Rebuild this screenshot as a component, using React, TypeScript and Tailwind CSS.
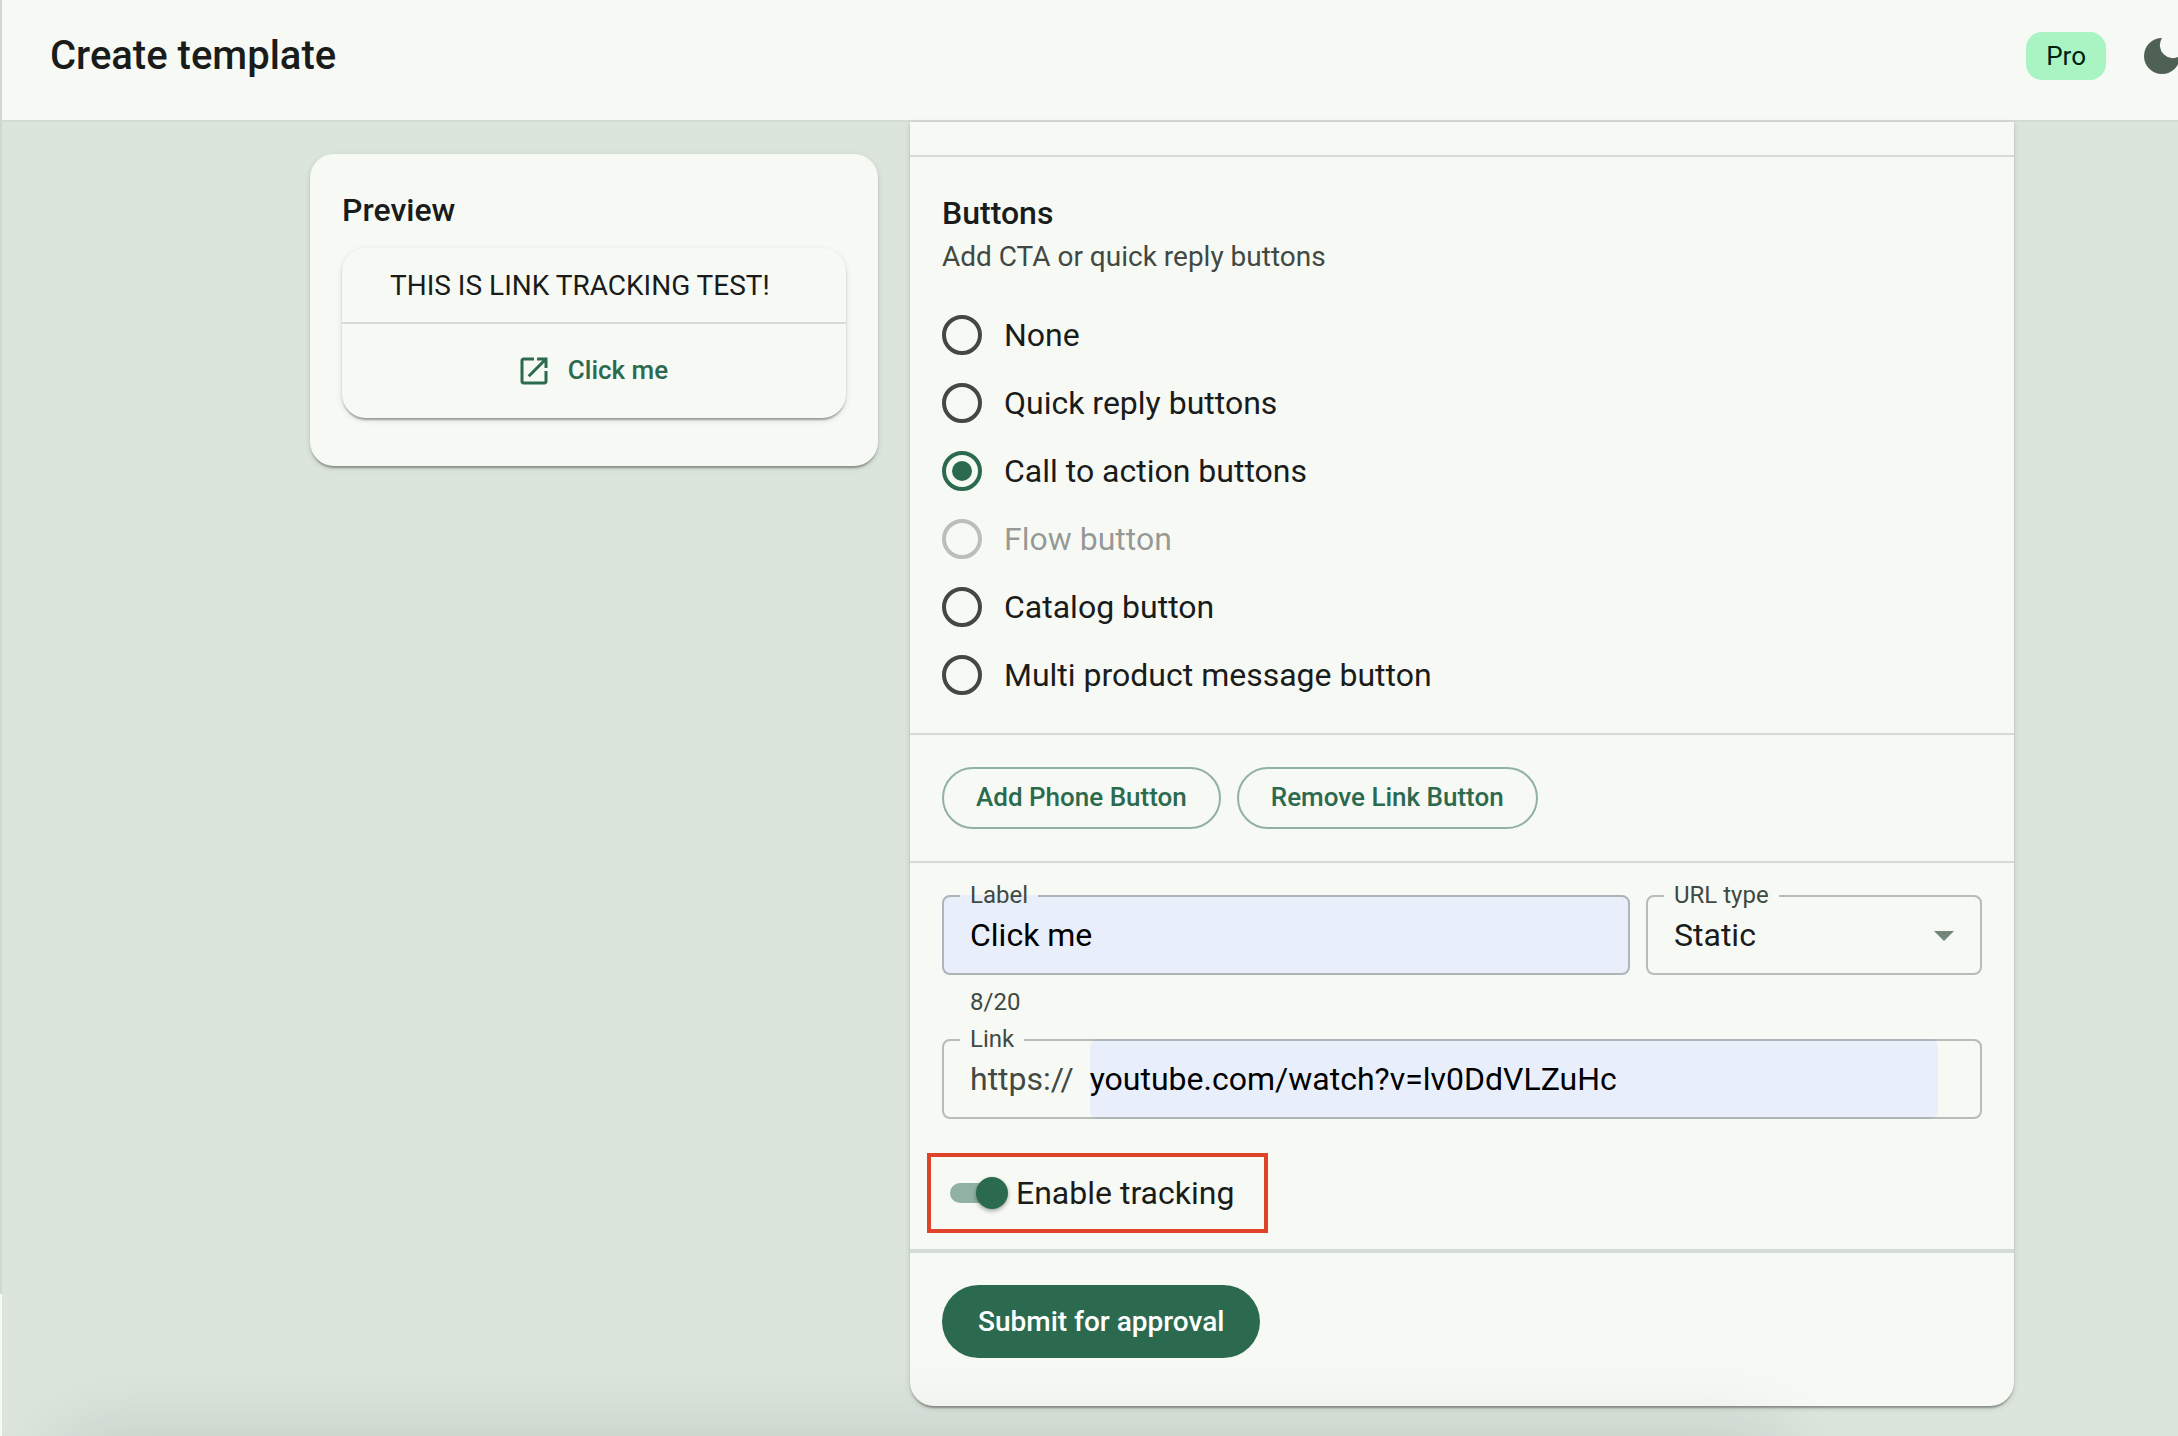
import React, { useState } from 'react';

type ButtonKind = 'none' | 'quick-reply' | 'cta' | 'flow' | 'catalog' | 'multi-product';

interface ButtonOption {
  value: ButtonKind;
  label: string;
  disabled?: boolean;
}

const buttonOptions: ButtonOption[] = [
  { value: 'none', label: 'None' },
  { value: 'quick-reply', label: 'Quick reply buttons' },
  { value: 'cta', label: 'Call to action buttons' },
  { value: 'flow', label: 'Flow button', disabled: true },
  { value: 'catalog', label: 'Catalog button' },
  { value: 'multi-product', label: 'Multi product message button' },
];

const cardShadow =
  'shadow-[0_4px_2px_-2px_rgba(0,0,0,0.2),0_2px_2px_0_rgba(0,0,0,0.14),0_2px_6px_0_rgba(0,0,0,0.12)]';

const MoonIcon = () => (
  <svg viewBox="0 0 24 24" className="size-12" fill="currentColor" aria-hidden="true">
    <path d="M12 3a9 9 0 1 0 9 9A6.5 6.5 0 0 1 12 3z" />
  </svg>
);

const OpenInNewIcon = () => (
  <svg viewBox="0 0 24 24" className="-ml-1 size-9" fill="currentColor" aria-hidden="true">
    <path d="M19 19H5V5h7V3H5c-1.11 0-2 .9-2 2v14c0 1.1.89 2 2 2h14c1.1 0 2-.9 2-2v-7h-2v7zM14 3v2h3.59l-9.83 9.83 1.41 1.41L19 6.41V10h2V3h-7z" />
  </svg>
);

interface OutlinedFieldProps {
  id: string;
  label: string;
  className?: string;
  children: React.ReactNode;
}

/** Outlined box whose label sits in a notch of the top border */
const OutlinedField: React.FC<OutlinedFieldProps> = ({ id, label, className = '', children }) => (
  <div className={`relative flex h-20 items-center rounded-lg ${className}`}>
    {children}
    <fieldset className="pointer-events-none absolute inset-x-0 -top-3 bottom-0 rounded-lg border-2 border-[#3f4941]/35">
      <legend className="ml-4 h-[26px] px-2.5 text-2xl leading-6 text-[#414942]">
        <label htmlFor={id}>{label}</label>
      </legend>
    </fieldset>
  </div>
);

const Header = () => (
  <header className="flex h-[122px] items-start justify-between overflow-hidden border-b-2 border-[#d3dbd4] bg-[#f7faf4] pl-12">
    <h1 className="py-7 text-[40px] leading-[56px] font-medium">Create template</h1>
    <div className="flex h-28 items-center gap-8">
      <span className="rounded-2xl bg-[#a9f4c2] px-5 text-[26px] leading-[48px] text-[#00210f]">Pro</span>
      <button type="button" aria-label="Toggle dark mode" className="-mr-2 text-[#4f6155]">
        <MoonIcon />
      </button>
    </div>
  </header>
);

const PreviewCard = ({ buttonLabel }: { buttonLabel: string }) => (
  <section className={`mt-8 rounded-3xl bg-[#f7faf4] px-8 pt-8 pb-12 ${cardShadow}`}>
    <h2 className="text-[32px] leading-[48px] font-medium">Preview</h2>
    <div className={`mt-3.5 rounded-3xl ${cardShadow}`}>
      <p className="px-12 pt-0.5 text-[28px] leading-[72px]">THIS IS LINK TRACKING TEST!</p>
      <div className="flex h-24 items-center justify-center gap-4 border-t-2 border-[#d5dbd5] text-[#2c6a4f]">
        <OpenInNewIcon />
        <span className="pb-0.5 text-[26px] leading-10 font-medium">{buttonLabel}</span>
      </div>
    </div>
  </section>
);

export default function App() {
  const [kind, setKind] = useState<ButtonKind>('cta');
  const [label, setLabel] = useState('Click me');
  const [urlType, setUrlType] = useState('static');
  const [link, setLink] = useState('youtube.com/watch?v=lv0DdVLZuHc');
  const [tracking, setTracking] = useState(true);

  return (
    <div className="flex min-h-screen bg-[#dbe5dc] font-[Roboto,sans-serif] text-[#191c1a]">
      {/* right edge of the collapsed sidebar */}
      <div className="flex w-0.5 shrink-0 flex-col bg-[#d0d9d1]">
        <div className="mt-auto h-[142px] bg-[#f7faf4]" />
      </div>

      <div className="min-w-0 flex-1">
        <Header />

        <main className="grid grid-cols-[568fr_1104fr] items-start gap-8 pr-[164px] pb-[30px] pl-[308px]">
          <PreviewCard buttonLabel={label} />

          <form
            className={`divide-y-2 divide-[#d3dcd4] rounded-b-3xl bg-[#f7faf4] ${cardShadow}`}
            onSubmit={(e) => e.preventDefault()}
          >
            <div className="h-[35px]" />

            <section className="px-8 pt-8 pb-6">
              <h2 className="text-[32px] leading-[48px] font-medium">Buttons</h2>
              <p className="text-[28px] leading-10 text-[#414942]">Add CTA or quick reply buttons</p>
              <div className="mt-6" role="radiogroup" aria-label="Buttons">
                {buttonOptions.map((option) => (
                  <label
                    key={option.value}
                    className={`flex h-[68px] items-center gap-[22px] text-[32px] leading-[48px] ${
                      option.disabled ? 'text-[#191c1a]/45' : ''
                    }`}
                  >
                    <input
                      type="radio"
                      name="button-kind"
                      value={option.value}
                      checked={kind === option.value}
                      disabled={option.disabled}
                      onChange={() => setKind(option.value)}
                      className="grid size-10 shrink-0 appearance-none place-content-center rounded-full border-4 border-[#414942] checked:border-[#2c6a4f] checked:before:size-5 checked:before:rounded-full checked:before:bg-[#2c6a4f] disabled:border-[#b9c0b9]"
                    />
                    {option.label}
                  </label>
                ))}
              </div>
            </section>

            <section className="flex gap-4 px-8 py-8 text-[26px] leading-[56px] font-medium text-[#2c6a4f]">
              <button type="button" className="rounded-full border-2 border-[#2c6a4f]/50 px-8 pb-0.5">
                Add Phone Button
              </button>
              <button type="button" className="rounded-full border-2 border-[#2c6a4f]/50 px-8 pb-0.5">
                Remove Link Button
              </button>
            </section>

            <section className="px-8 pt-8 pb-4">
              <div className="flex gap-4">
                <OutlinedField id="button-label" label="Label" className="flex-1 bg-[#e8effb]">
                  <input
                    id="button-label"
                    value={label}
                    maxLength={20}
                    onChange={(e) => setLabel(e.target.value)}
                    className="h-full w-full px-7 text-[32px] text-black outline-none"
                  />
                </OutlinedField>
                <OutlinedField id="url-type" label="URL type" className="w-[336px]">
                  <select
                    id="url-type"
                    value={urlType}
                    onChange={(e) => setUrlType(e.target.value)}
                    className="h-full w-full appearance-none px-7 text-[32px] outline-none"
                  >
                    <option value="static">Static</option>
                    <option value="dynamic">Dynamic</option>
                  </select>
                  <svg
                    viewBox="0 0 24 24"
                    className="pointer-events-none absolute right-3.5 size-12 text-[#74857a]"
                    fill="currentColor"
                    aria-hidden="true"
                  >
                    <path d="M7 10l5 5 5-5z" />
                  </svg>
                </OutlinedField>
              </div>
              <p className="mt-2 px-7 text-2xl leading-[38px] text-[#414942]">{label.length}/20</p>

              <OutlinedField id="link" label="Link" className="mt-[18px] gap-4 pr-11 pl-7 text-[32px]">
                <span className="text-[#414942]">https://</span>
                <input
                  id="link"
                  value={link}
                  onChange={(e) => setLink(e.target.value)}
                  className="h-full min-w-0 flex-1 rounded-lg bg-[#e8effb] text-black outline-none"
                />
              </OutlinedField>

              <label className="mt-[34px] -ml-[15px] flex h-20 w-fit items-center gap-3.5 border-4 border-[#df4329] pr-[30px] pl-[19px] text-[32px] leading-[48px]">
                <input
                  type="checkbox"
                  role="switch"
                  checked={tracking}
                  onChange={(e) => setTracking(e.target.checked)}
                  className="relative h-5 w-[52px] appearance-none rounded-full bg-black/30 before:absolute before:-top-1.5 before:-left-1.5 before:size-8 before:rounded-full before:bg-white before:shadow-[0_2px_4px_rgba(0,0,0,0.35)] checked:bg-[#2c6a4f]/50 checked:before:left-[26px] checked:before:bg-[#2c6a4f]"
                />
                Enable tracking
              </label>
            </section>

            <section className="border-t-2 border-[#d3dcd4] px-8 pt-8 pb-12">
              <button
                type="submit"
                className="rounded-full bg-[#2c6a4f] px-9 text-[28px] leading-[73px] font-medium text-white"
              >
                Submit for approval
              </button>
            </section>
          </form>
        </main>
      </div>

      {/* shadow of the toast that waits below the window */}
      <div className="pointer-events-none fixed top-full right-[400px] left-16 h-40 shadow-[0_0_80px_rgba(0,0,0,0.12)]" />
    </div>
  );
}
